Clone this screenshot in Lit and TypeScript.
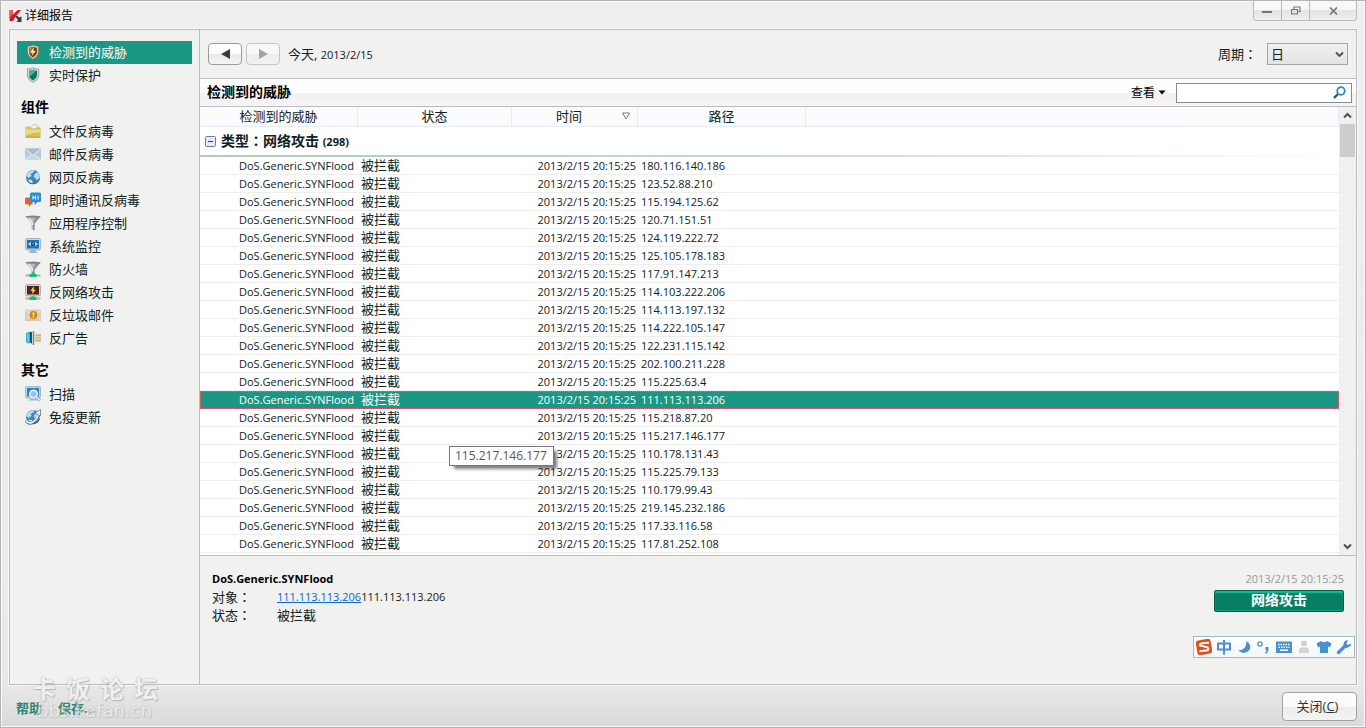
import { LitElement, html, svg, css, nothing } from "lit";
import { customElement, state } from "lit/decorators.js";
import { classMap } from "lit/directives/class-map.js";

const monitor = (screen: string, frame: string, edge: string) => svg`
  <rect x="0.5" y="0.5" width="15" height="11.5" rx="1.5" fill=${frame} stroke=${edge} stroke-width="0.7"/>
  <rect x="2" y="2" width="12" height="8.5" fill=${screen}/>`;

const globe = svg`
  <circle cx="8" cy="8" r="7" fill="#3d86bd"/>
  <path d="M3 3.5Q6 0.6 9.5 1.3L8.5 3.5L6 4.5L6.5 7L3.5 9L1.2 7Q1.3 5 3 3.5zM10 4.5L13 3.2Q15 5.5 14.8 8.5L12.5 11.5L10.5 9.5L8.5 8zM4 10.5L7 11L8 14.8Q4.5 14.5 3 12z" fill="#b5dcf1"/>
  <path d="M2 11.5A7 7 0 0 0 14.6 10" fill="none" stroke="#25618f"/>`;

const funnel = (bottom: number) => svg`
  <path d="M0.5 1.5L6.5 8.5V${bottom - 1.5}L9.5 ${bottom}V8.5L15.5 1.5z" fill="#b4bac0"/>
  <path d="M9.5 ${bottom}V8.5L15.5 1.5H11L8 8.5V${bottom - 0.8}z" fill="#868d94"/>
  <path d="M3.5 2.5l4 5.5v2" fill="none" stroke="#e9edf0" stroke-width="1.4"/>
  <ellipse cx="8" cy="1.7" rx="7.5" ry="1.1" fill="#7f878e"/>`;

const netBase = svg`
  <path d="M0.5 14.5h15" stroke="#a4acb2" stroke-width="1.8"/>
  <path d="M4.5 14.5h7" stroke="#14c06f" stroke-width="3"/>
  <path d="M8 11.5v2" stroke="#14c06f" stroke-width="3"/>`;

const badge = "M8 0.8Q10.5 2.2 13.7 2V9Q13.2 13 8 15.4Q2.8 13 2.3 9V2Q5.5 2.2 8 0.8z";
const badgeInner = "M8 2.8Q10 3.7 12 3.7V8.7Q11.6 11.6 8 13.4Q4.4 11.6 4 8.7V3.7Q6 3.7 8 2.8z";

const ICONS: Record<string, unknown> = {
  threat: svg`
    <path d=${badge} fill="#d9d2c2" stroke="#6d6248" stroke-width="0.8"/>
    <path d=${badgeInner} fill="#6b4712"/>
    <path d="M8 2.8Q6 3.7 4 3.7V8.7Q4.2 9.8 5 10.8L8 8z" fill="#a87d33"/>
    <path d="M9 3.5L5.3 8.5h2.3L6.8 12L10.7 7H8.4z" fill="#fff0b8"/>`,
  shield: svg`
    <path d=${badge} fill="#d4dadb" stroke="#84908f" stroke-width="0.8"/>
    <path d=${badgeInner} fill="#12765f"/>
    <path d="M8 2.8Q6 3.7 4 3.7V8.7Q4.1 9.3 4.3 9.8L11.5 3.7Q9.5 3.6 8 2.8z" fill="#47b198"/>`,
  folder: svg`
    <path d="M4.5 6L9 1L12.5 2.5L14 6z" fill="#f4f4f3" stroke="#aaaaa6" stroke-width="0.7"/>
    <path d="M0.4 4.5L1.5 3.5H5L6.5 5.5H10.5L12 4L15.6 4.5V13.5Q15.6 14.5 14.6 14.5H1.4Q0.4 14.5 0.4 13.5z" fill="#d2c058"/>
    <path d="M0.8 6.5H15.2V9.5Q8 9 0.8 12z" fill="#e6dc8c"/>
    <path d="M0.8 14.2H15.2" stroke="#b29f3a"/>`,
  mail: svg`
    <rect x="0" y="2.5" width="16" height="11" fill="#b4c9da"/>
    <path d="M0 13.5L6.5 8.5L8 9.5L9.5 8.5L16 13.5z" fill="#c6d7e4"/>
    <path d="M0.5 13.3L6.5 8.5M15.5 13.3L9.5 8.5" stroke="#e7eff5" stroke-width="0.9"/>
    <path d="M0 2.5L8 9.5L16 2.5z" fill="#a5bdd0"/><path d="M0.5 3L8 9.5L15.5 3" fill="none" stroke="#edf3f7"/>`,
  web: globe,
  chat: svg`
    <path d="M1.5 5.5h6v7h-1.5L4 15v-2.5H1.5Q0 12.5 0 11V7q0-1.5 1.5-1.5z" fill="#dc6428"/>
    <path d="M6.5 0.5h8q1.5 0 1.5 1.5v6.5q0 1.5-1.5 1.5h-2L9.5 13v-3h-3Q5 10 5 8.5V2Q5 0.5 6.5 0.5z" fill="#2b90cd"/>
    <path d="M8 3.5v4M10.5 3.5v4M8 5.5H10.5M13 3.5v4" stroke="#fff"/>`,
  funnel: funnel(15.5),
  monitor: svg`
    <path d="M3.5 14.5L6 12h4l2.5 2.5Q8 16 3.5 14.5z" fill="#a3b6c5"/>
    ${monitor("#1d73b3", "#c3d8e7", "#8ba2b5")}
    <path d="M3 6Q8 1.5 13 6Q8 10.5 3 6z" fill="#cfeafa"/><circle cx="8" cy="5.9" r="2.3" fill="#124f82"/><circle cx="8" cy="5.6" r="0.7" fill="#fff"/>`,
  firewall: svg`${funnel(13)}${netBase}`,
  attack: svg`
    ${netBase}${monitor("#4b2321", "#e0cdc1", "#a8958a")}
    <path d="M9 2.3L5.3 6.7h2.3L6.8 10.2L10.9 5.7H8.6z" fill="#ffd84d"/>`,
  spam: svg`
    <rect x="0" y="2.5" width="16" height="11" fill="#dfcbbb"/>
    <path d="M0.5 13L6.5 8.5M15.5 13L9.5 8.5M0.5 3L8 9.5L15.5 3" fill="none" stroke="#f3e9e0"/>
    <path d="M0 13.2h16" stroke="#cdb39f" stroke-width="0.8"/>
    <circle cx="8.5" cy="8" r="3.9" fill="#c98f0c"/><path d="M8.5 5.4v3M8.5 9.4v1.2" stroke="#fff" stroke-width="1.5"/>`,
  banner: svg`
    <path d="M8 3.5h8v9H8z" fill="#e2d7b2"/><path d="M8 5.5h8M8 8h8M8 10.5h8" stroke="#b9ab82" stroke-width="0.9"/>
    <path d="M1 3L5.5 1.5V13L3 13.5L1 12z" fill="#2badd8"/><path d="M3 4v7.5" stroke="#a8e4f6"/>
    <path d="M5 2h2v12L5 12z" fill="#1f4e70"/>
    <path d="M8.5 1v14" stroke="#7d8b96" stroke-width="1.6"/><path d="M10 2v12" stroke="#dfe5e9"/>`,
  scan: svg`
    <path d="M3.5 14.5L6 12h4l2 2.5z" fill="#a3b6c5"/>
    ${monitor("#2383c2", "#c3d8e7", "#8ba2b5")}
    <circle cx="8.5" cy="8" r="3.8" fill="#8fc9e9" stroke="#f2f6f9" stroke-width="1.5"/>
    <path d="M11.3 11L15 14.7" stroke="#8797a3" stroke-width="3"/><path d="M11.3 11L15 14.5" stroke="#edf1f4" stroke-width="1.6"/>`,
  update: svg`
    ${globe}
    <path d="M1 11.5Q3 15.5 7.5 13.5Q12 11 14 5.5" fill="none" stroke="#536673" stroke-width="3"/>
    <path d="M1 11.5Q3 15 7.5 13.3Q11.8 11 13.5 5" fill="none" stroke="#eef2f5" stroke-width="1.8"/>
    <path d="M10 4L15.5 0.5L15.5 7z" fill="#eef2f5" stroke="#536673" stroke-width="0.7"/>`,
};

const NAV = [
  { title: "", items: [["threat", "检测到的威胁"], ["shield", "实时保护"]] },
  {
    title: "组件",
    items: [
      ["folder", "文件反病毒"], ["mail", "邮件反病毒"], ["web", "网页反病毒"],
      ["chat", "即时通讯反病毒"], ["funnel", "应用程序控制"], ["monitor", "系统监控"],
      ["firewall", "防火墙"], ["attack", "反网络攻击"], ["spam", "反垃圾邮件"], ["banner", "反广告"],
    ],
  },
  { title: "其它", items: [["scan", "扫描"], ["update", "免疫更新"]] },
];

const ADDRESSES = [
  "180.116.140.186", "123.52.88.210", "115.194.125.62", "120.71.151.51", "124.119.222.72",
  "125.105.178.183", "117.91.147.213", "114.103.222.206", "114.113.197.132", "114.222.105.147",
  "122.231.115.142", "202.100.211.228", "115.225.63.4", "111.113.113.206", "115.218.87.20",
  "115.217.146.177", "110.178.131.43", "115.225.79.133", "110.179.99.43", "219.145.232.186",
  "117.33.116.58", "117.81.252.108",
];

const THREAT = "DoS.Generic.SYNFlood";
const STAMP = "2013/2/15 20:15:25";
const colon = html`<span class="colon">：</span>`;

@customElement("app-root")
export class AppRoot extends LitElement {
  @state() private section = "threat";
  @state() private selected = 13;

  static styles = css`
    :host {
      display: block;
      font-family: "Open Sans", "Noto Sans CJK SC", sans-serif;
      font-size: 13px;
      line-height: 18px;
      color: #10211e;
    }
    * { box-sizing: border-box; }
    button, input, select { font: inherit; color: inherit; margin: 0; padding: 0; }
    button { background: none; border: 0; cursor: pointer; }
    svg { display: block; flex: none; }
    .colon { font-family: "Noto Sans CJK TC", sans-serif; line-height: 1; }
    .small { font-size: 11px; }

    .window {
      position: relative;
      display: flex;
      flex-direction: column;
      height: 100vh;
      padding: 0 8px;
      border: 1px solid #b4b4b4;
      background: linear-gradient(#efefef 0, #e9e9e9 94%, #dadada 100%);
      box-shadow: inset 0 0 0 1px #fafafa;
    }
    .titlebar { display: flex; align-items: flex-start; height: 28px; flex: none; }
    .caption { display: flex; flex: 1; align-items: center; gap: 3px; margin: 0; padding-top: 6px; font-size: 12px; font-weight: 400; color: #000; }
    .controls { display: flex; border: 1px solid #b9b9b9; border-top: 0; border-radius: 0 0 4px 4px; overflow: hidden; }
    .controls button {
      display: grid; place-items: center; width: 28px; height: 19px;
      background: linear-gradient(#f8f8f8 50%, #e3e3e3 50%, #efefef);
      border-right: 1px solid #b9b9b9;
    }
    .controls .exit { width: 46px; border-right: 0; }

    .frame { display: flex; flex: 1; min-height: 0; border: 1px solid #bcbcbc; background: #f1f1ef; outline: 1px solid #f8f8f8; }
    .sidebar { flex: none; width: 190px; padding: 11px 7px 0; border-right: 1px solid #bcbcbc; }
    .sidebar ul { list-style: none; margin: 0; padding: 0; }
    .sidebar h2 { margin: 0; height: 33px; padding: 11px 0 0 4px; font-size: 14px; line-height: 18px; color: #000; }
    .nav { display: flex; align-items: center; gap: 8px; width: 100%; height: 23px; padding: 0 0 2px 8px; text-align: left; }
    .nav.on { background: #1a9785; color: #fff; }

    .main { display: flex; flex: 1; flex-direction: column; min-width: 0; }
    .period { display: flex; align-items: center; height: 49px; padding: 0 8px; border-bottom: 1px solid #bcbcbc; gap: 4px; flex: none; }
    .step { display: grid; place-items: center; width: 34px; height: 22px; border: 1px solid #9b9b9b; border-radius: 4px; background: linear-gradient(#fff 50%, #e9e9e9 50%, #f4f4f4); }
    .step:disabled { opacity: 0.5; }
    .day { flex: 1; padding-left: 4px; }
    .pick { position: relative; margin-left: 6px; }
    .pick select { appearance: none; width: 81px; height: 22px; padding-left: 3px; border: 1px solid #a5a5a5; border-radius: 0; background: linear-gradient(#f0f0f0, #e4e4e4); }
    .pick svg { position: absolute; right: 4px; top: 8px; pointer-events: none; }

    .heading { display: flex; align-items: center; height: 28px; padding: 0 4px 0 7px; border-bottom: 1px solid #bcbcbc; background: linear-gradient(#fdfdfd 50%, #f1f1f1 50%, #f5f5f5); flex: none; }
    .heading h1 { flex: 1; margin: 0; padding-bottom: 1px; font-size: 14px; line-height: 20px; color: #000; }
    .view { display: flex; align-items: center; gap: 3px; margin-right: 10px; font-size: 12px; color: #000; }
    .search { display: flex; align-items: center; width: 176px; height: 20px; padding-right: 5px; border: 1px solid #878c94; background: #fff; }
    .search input { flex: 1; min-width: 0; border: 0; outline: 0; background: none; padding: 0 3px; }

    .list { display: flex; flex: 1; min-height: 0; background: #fff; }
    .scroll { flex: 1; min-width: 0; overflow: hidden; }
    table { width: 100%; border-collapse: separate; border-spacing: 0; table-layout: fixed; }
    th, td { padding: 0; white-space: nowrap; text-align: left; }
    .c-name { width: 158px; }
    .c-state { width: 154px; }
    .c-time { width: 126px; }
    .c-path { width: 168px; }
    thead th { height: 20px; padding-bottom: 1px; line-height: 18px; border-right: 1px solid #e3ecf7; border-bottom: 1px solid #e3ecf7; background: #fcfcfc; font-weight: 400; text-align: center; }
    .sort { display: flex; align-items: center; justify-content: space-between; width: 100%; padding: 0 7px 0 44px; }
    .group th { height: 30px; padding: 0 0 2px 5px; background: linear-gradient(90deg, #aecdbc, #c6dacd 50%, #fff) bottom / 100% 2px no-repeat; }
    .fold { display: flex; align-items: center; gap: 5px; font-size: 14px; font-weight: 700; line-height: 20px; }
    .item td { height: 18px; line-height: 17px; border-bottom: 1px solid #eeeeee; }
    .item .name { padding-left: 39px; font-size: 11px; }
    .item .state { padding-left: 3px; }
    .item .time { padding-right: 2px; text-align: right; font-size: 11px; }
    .item .path { padding-left: 3px; font-size: 11px; }
    .item.on { outline: 1px dotted #e8667c; outline-offset: -1px; background: #1a9785; color: #fff; }
    .item.on td { border-bottom-color: transparent; }

    .bar { display: flex; flex-direction: column; flex: none; width: 17px; background: #f0f0f0; }
    .bar button { display: grid; place-items: center; height: 17px; }
    .track { flex: 1; }
    .thumb { width: 15px; height: 33px; margin-left: 1px; background: #cdcdcd; }

    .detail { display: flex; justify-content: space-between; align-items: flex-start; flex: none; min-height: 129px; padding: 14px 12px; border-top: 1px solid #bcbcbc; }
    .detail h2 { margin: 0; font-size: 11px; line-height: 18px; color: #000; }
    .detail dl { display: grid; grid-template-columns: 65px auto; margin: 0; }
    .detail dd { margin: 0; }
    .detail a { color: #0b66cf; }
    .verdict { display: flex; flex-direction: column; align-items: flex-end; gap: 2px; }
    .verdict time { color: #999; }
    .verdict button { width: 130px; height: 22px; padding-bottom: 2px; border: 1px solid #045f49; border-radius: 2px; background: #077f62; box-shadow: inset 0 2px 1px #12bd8f, inset 0 -1px 1px #12a57d; color: #fff; font-size: 14px; font-weight: 700; }

    .footer { display: flex; align-items: center; justify-content: space-between; flex: none; height: 42px; }
    .links { display: flex; gap: 16px; padding: 3px 0 0 7px; }
    .links a { color: #2f8674; font-weight: 700; text-decoration: none; }
    .close { width: 75px; height: 29px; padding-right: 4px; border: 1px solid #a3a3a3; border-radius: 4px; background: linear-gradient(#fbfbfb 50%, #ececec 50%, #f3f3f3); color: #333; }

    .tip { position: absolute; left: 448px; top: 445px; padding: 0 6px 0 5px; border: 1px solid #767676; background: #fff; box-shadow: 4px 4px 3px -1px rgba(0, 0, 0, 0.5); color: #575757; font-size: 12px; }
    .ime { position: absolute; right: 10px; bottom: 69px; display: flex; align-items: center; gap: 4px; width: 162px; height: 22px; padding: 0 2px; border: 1px solid #a3b8c8; background: linear-gradient(#fff, #f3f8fc); }
    .ime button { width: 16px; height: 18px; display: grid; place-items: center; }
    .mark { position: absolute; left: 31px; bottom: 8px; color: #f2f2f2; text-shadow: 0 0 2px #a6a6a6, 1px 1px 1px #b4b4b4; opacity: 0.85; pointer-events: none; white-space: nowrap; }
    .mark p { display: flex; justify-content: space-between; margin: 0; font-size: 24px; font-weight: 700; line-height: 28px; width: 126px; }
    .mark small { display: block; padding-left: 5px; font-family: "DejaVu Sans", sans-serif; font-size: 18px; line-height: 16px; opacity: 0.7; }
  `;

  private renderNav() {
    return html`<nav class="sidebar" aria-label="报告">
      ${NAV.map((g) => html`
        ${g.title ? html`<h2>${g.title}</h2>` : nothing}
        <ul>
          ${g.items.map(([id, label]) => html`<li>
            <button class=${classMap({ nav: true, on: this.section === id })} @click=${() => (this.section = id)}>
              <svg width="16" height="16" viewBox="0 0 16 16" aria-hidden="true">${ICONS[id]}</svg>${label}
            </button>
          </li>`)}
        </ul>`)}
    </nav>`;
  }

  private renderTable() {
    return html`<div class="list">
      <div class="scroll">
        <table>
          <colgroup><col class="c-name"><col class="c-state"><col class="c-time"><col class="c-path"><col></colgroup>
          <thead>
            <tr>
              <th scope="col">检测到的威胁</th>
              <th scope="col">状态</th>
              <th scope="col"><button class="sort">时间
                <svg width="8" height="8" viewBox="0 0 8 8"><path d="M0.5 1h7L4 7z" fill="#fff" stroke="#777"/></svg>
              </button></th>
              <th scope="col">路径</th>
              <th></th>
            </tr>
          </thead>
          <tbody>
            <tr class="group"><th colspan="5" scope="rowgroup"><button class="fold">
              <svg width="11" height="11" viewBox="0 0 11 11"><rect x="0.5" y="0.5" width="10" height="10" rx="1" fill="#e3e9f6" stroke="#6b7ba0"/><path d="M3 5.5h5" stroke="#2c3f70"/></svg>
              <span>类型${colon}网络攻击 <span class="small">(298)</span></span>
            </button></th></tr>
            ${ADDRESSES.map((ip, i) => html`
              <tr class=${classMap({ item: true, on: i === this.selected })} @click=${() => (this.selected = i)}>
                <td class="name">${THREAT}</td><td class="state">被拦截</td>
                <td class="time">${STAMP}</td><td class="path">${ip}</td><td></td>
              </tr>`)}
          </tbody>
        </table>
      </div>
      <div class="bar">
        <button aria-label="向上"><svg width="9" height="7" viewBox="0 0 9 7"><path d="M1 5.5L4.5 2L8 5.5" fill="none" stroke="#505050" stroke-width="2"/></svg></button>
        <div class="track"><div class="thumb"></div></div>
        <button aria-label="向下"><svg width="9" height="7" viewBox="0 0 9 7"><path d="M1 1.5L4.5 5L8 1.5" fill="none" stroke="#505050" stroke-width="2"/></svg></button>
      </div>
    </div>`;
  }

  private renderIme() {
    const b = "#4a90d0";
    const icons = [
      svg`<rect x="0.5" y="0.5" width="15" height="15" rx="3" transform="rotate(-10 8 8)" fill="#e0501c"/><path d="M13 3.8L6 4.3Q3.8 4.8 4 6.5L11.5 8.3Q13 9.5 11.5 11.3L3.5 12.3" fill="none" stroke="#fff" stroke-width="2"/>`,
      svg`<path d="M2 4.5h12v6H2zM8 1v14.5" fill="none" stroke=${b} stroke-width="2"/>`,
      svg`<path d="M10.5 2Q16 6 13.5 11Q8.5 16.5 2 11.5Q10.5 11.5 10.5 2z" fill=${b}/>`,
      svg`<circle cx="4" cy="5" r="2.1" fill="none" stroke=${b} stroke-width="1.4"/><path d="M9.5 8h3v3.5L10.5 14.5H9L10.5 11H9.5z" fill=${b}/>`,
      svg`<rect x="0" y="2.5" width="16" height="11.5" fill=${b}/><path d="M2 5.5h12M2.5 8.2h11" stroke="#fff" stroke-width="1.5" stroke-dasharray="1.5 1"/><path d="M4 11.2h8" stroke="#fff" stroke-width="1.5"/>`,
      svg`<circle cx="8" cy="4.5" r="3" fill="#d2d2d2"/><path d="M3 14V11q0-2.5 2.5-2.5h5Q13 8.5 13 11v3z" fill="#d2d2d2"/>`,
      svg`<path d="M0.5 4.5L5 2Q8 4.5 11 2L15.5 4.5L14 8.5L12 7.5V14H4V7.5L2 8.5z" fill=${b}/>`,
      svg`<path d="M2.5 13.5L9 7" stroke=${b} stroke-width="3.2" stroke-linecap="round"/><path d="M12 1Q7 1.5 7.5 7Q10 11 15 6.5V4.5L12 6L10.5 4.5z" fill=${b}/>`,
    ];
    const names = ["输入法", "中文", "半角", "标点", "软键盘", "用户", "皮肤", "工具"];
    return html`<div class="ime">${icons.map((g, i) => html`
      <button aria-label=${names[i]}><svg width="16" height="16" viewBox="0 0 16 16">${g}</svg></button>`)}</div>`;
  }

  render() {
    return html`<div class="window">
      <header class="titlebar">
        <p class="caption">
          <svg width="13" height="14" viewBox="0 0 13 14"><path d="M0 0H13L7.5 7L5 13H0z" fill="#fff"/><path d="M0.5 1h3.5v4.5L8.5 1H12L7 7L4 12H0.5z" fill="#d9141c"/><path d="M0.5 1h3.5v4L0.5 9z" fill="#ee5a5f"/><path d="M6 7.5L8 6.5L10 8.5L12.5 7.5V13H7.5L9 11z" fill="#3a3a3a"/></svg>
          详细报告
        </p>
        <div class="controls">
          <button aria-label="最小化"><svg width="11" height="9" viewBox="0 0 11 9"><path d="M0 6h10" stroke="#777" stroke-width="2"/></svg></button>
          <button aria-label="还原"><svg width="10" height="9" viewBox="0 0 10 9"><path d="M3 3V1h6v4.5H7.5M0.5 3.5h6v4.5h-6z" fill="none" stroke="#777" stroke-width="1.2"/></svg></button>
          <button class="exit" aria-label="关闭窗口"><svg width="9" height="8" viewBox="0 0 9 8"><path d="M1 0.5L8 7.5M8 0.5L1 7.5" stroke="#777" stroke-width="1.7"/></svg></button>
        </div>
      </header>

      <div class="frame">
        ${this.renderNav()}
        <main class="main">
          <div class="period">
            <button class="step" aria-label="前一天"><svg width="9" height="10" viewBox="0 0 9 10"><path d="M9 0v10L0 5z" fill="#3a3a3a"/></svg></button>
            <button class="step" aria-label="后一天" disabled><svg width="9" height="10" viewBox="0 0 9 10"><path d="M0 0v10l9-5z" fill="#555"/></svg></button>
            <span class="day">今天, <span class="small">2013/2/15</span></span>
            <label for="span">周期${colon}</label>
            <div class="pick">
              <select id="span"><option>日</option><option>周</option><option>月</option></select>
              <svg width="9" height="7" viewBox="0 0 9 7"><path d="M1 1.5L4.5 5L8 1.5" fill="none" stroke="#505050" stroke-width="1.8"/></svg>
            </div>
          </div>
          <div class="heading">
            <h1>检测到的威胁</h1>
            <button class="view">查看<svg width="8" height="5" viewBox="0 0 8 5"><path d="M0.5 0.5h7L4 4.5z" fill="#000"/></svg></button>
            <div class="search">
              <input type="search" aria-label="搜索">
              <svg width="13" height="13" viewBox="0 0 13 13"><path d="M1 12L5 8" stroke="#274f9c" stroke-width="2.4"/><circle cx="8" cy="5" r="3.8" fill="#fff" stroke="#3187c6" stroke-width="1.8"/></svg>
            </div>
          </div>
          ${this.renderTable()}
          <section class="detail">
            <div>
              <h2>${THREAT}</h2>
              <dl>
                <dt>对象${colon}</dt><dd class="small"><a href="#object">${ADDRESSES[this.selected]}</a>${ADDRESSES[this.selected]}</dd>
                <dt>状态${colon}</dt><dd>被拦截</dd>
              </dl>
            </div>
            <div class="verdict"><time class="small">${STAMP}</time><button>网络攻击</button></div>
          </section>
        </main>
      </div>

      <footer class="footer">
        <div class="links"><a href="#help">帮助</a><a href="#save">保存...</a></div>
        <button class="close">关闭(<u>C</u>)</button>
      </footer>

      <div class="tip" role="tooltip">115.217.146.177</div>
      ${this.renderIme()}
      <div class="mark"><p><span>卡</span><span>饭</span><span>论</span><span>坛</span></p><small>bbs.kafan.cn</small></div>
    </div>`;
  }
}
